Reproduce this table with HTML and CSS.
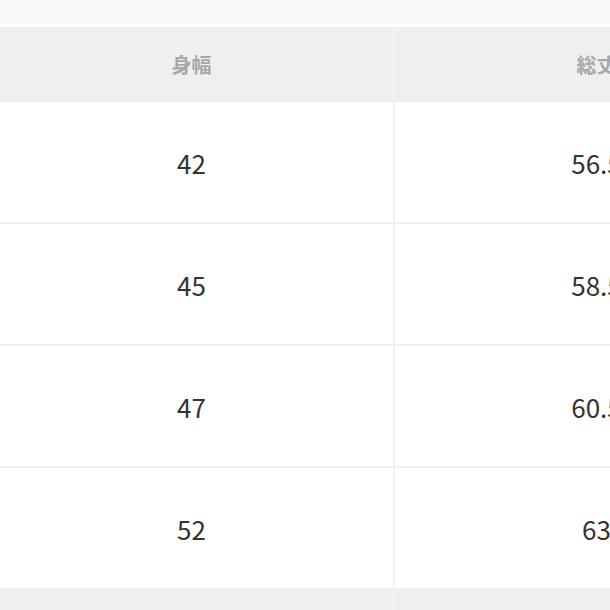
FILE: index.html
```html
<!DOCTYPE html>
<html lang="ja">
<head>
<meta charset="utf-8">
<link rel="stylesheet" href="styles.css">
</head>
<body>
<div class="page">
  <div class="top-band"></div>
  <div class="size-table">
    <div class="row head">
      <div class="cell">身幅</div>
      <div class="cell">総丈</div>
    </div>
    <div class="row">
      <div class="cell">42</div>
      <div class="cell">56.5</div>
    </div>
    <div class="row">
      <div class="cell">45</div>
      <div class="cell">58.5</div>
    </div>
    <div class="row">
      <div class="cell">47</div>
      <div class="cell">60.5</div>
    </div>
    <div class="row">
      <div class="cell">52</div>
      <div class="cell">63</div>
    </div>
    <div class="row foot">
      <div class="cell"></div>
      <div class="cell"></div>
    </div>
  </div>
</div>
</body>
</html>
```
FILE: styles.css
```css
html, body {
  margin: 0;
  padding: 0;
  background: #ffffff;
  overflow: hidden;
}
.page {
  width: 610px;
  height: 610px;
  overflow: hidden;
  font-family: "Noto Sans CJK JP", "Noto Sans", sans-serif;
}
.top-band {
  height: 24px;
  background: #f8f8f8;
  margin-bottom: 3px;
}
.size-table {
  margin-left: -10px;
  width: 808px;
}
.row {
  display: grid;
  grid-template-columns: 405px 403px;
  height: 120px;
  border-bottom: 2px solid #f0f0f0;
}
.cell {
  display: flex;
  align-items: center;
  justify-content: center;
  font-size: 26px;
  color: #333333;
}
.cell:first-child {
  border-right: 2px solid #f2f2f2;
}
.row.head {
  height: 75px;
  border-bottom: none;
  background: #efefef;
}
.row.head .cell {
  font-size: 20px;
  font-weight: 700;
  color: #a8a8a8;
}
.row.head .cell:first-child {
  border-right: 2px solid #f3f3f3;
}
.row.foot {
  height: 40px;
  background: #efefef;
  border-bottom: none;
}
.row.foot .cell:first-child {
  border-right: 2px solid #f3f3f3;
}
```
